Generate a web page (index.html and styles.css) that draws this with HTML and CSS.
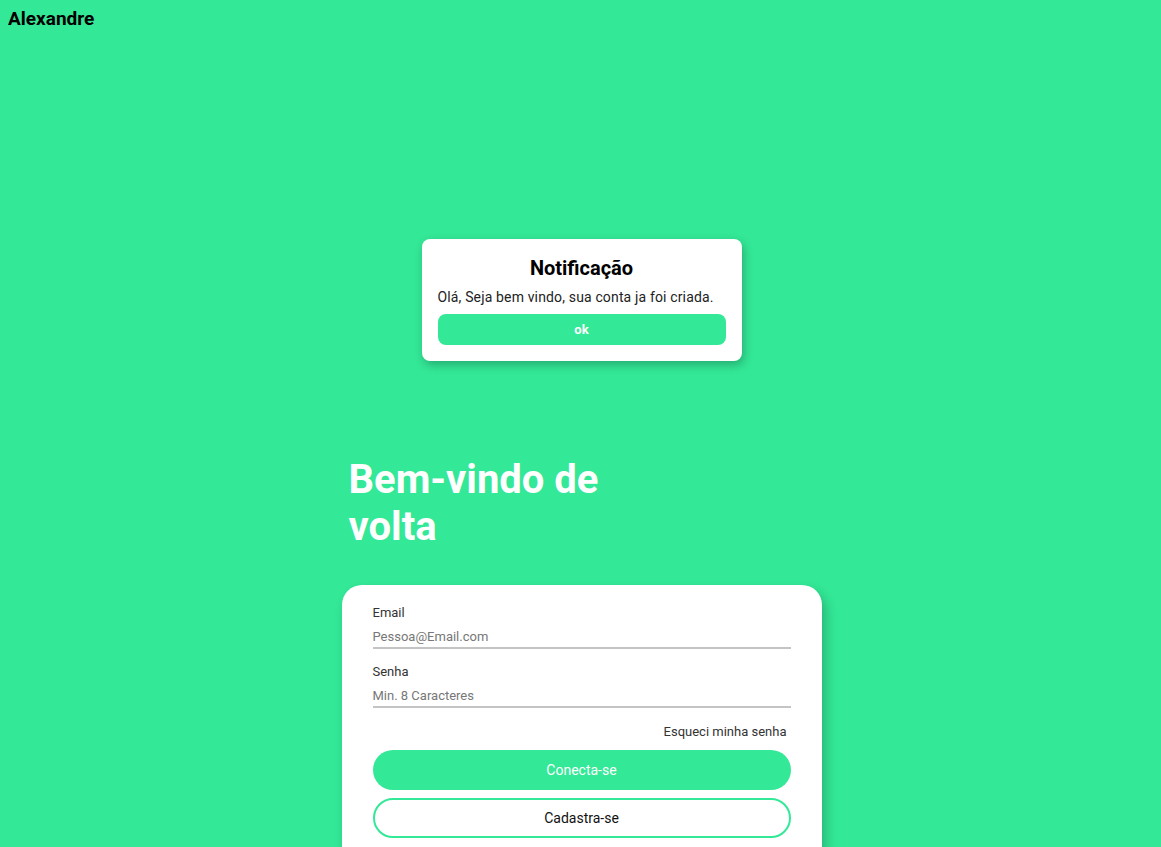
FILE: index.html
```html
<!DOCTYPE html>
<html lang="pt">
<head>
<meta charset="utf-8">
<title>Login</title>
<link rel="stylesheet" href="styles.css">
</head>
<body>
<header class="topbar">
  <h1 class="brand">Alexandre</h1>
</header>
<main class="page">
  <section class="notice">
    <h2 class="notice-title">Notificação</h2>
    <p class="notice-text">Olá, Seja bem vindo, sua conta ja foi criada.</p>
    <button class="notice-btn" type="button">ok</button>
  </section>
  <div class="login">
    <h2 class="welcome">Bem-vindo de volta</h2>
    <form class="card">
      <label class="field">
        <span class="field-label">Email</span>
        <input class="field-input" type="email" placeholder="Pessoa@Email.com">
      </label>
      <label class="field">
        <span class="field-label">Senha</span>
        <input class="field-input" type="password" placeholder="Min. 8 Caracteres">
      </label>
      <a class="forgot" href="#">Esqueci minha senha</a>
      <button class="btn btn-primary" type="button">Conecta-se</button>
      <button class="btn btn-outline" type="button">Cadastra-se</button>
    </form>
  </div>
</main>
</body>
</html>
```
FILE: styles.css
```css
html, body {
  height: 100%;
}
body {
  margin: 8px;
  background: #33e897;
  font-family: Roboto, "Liberation Sans", Arial, sans-serif;
  overflow: hidden;
}
.topbar {
  display: flex;
}
.brand {
  margin: 0;
  font-size: 19px;
  font-weight: 700;
  color: #000;
  line-height: 21px;
}
.page {
  display: flex;
  flex-direction: column;
  align-items: center;
}
.notice {
  margin-top: 210px;
  margin-left: 2px;
  width: 320px;
  box-sizing: border-box;
  padding: 17px 16px 16px;
  background: #fff;
  border-radius: 8px;
  box-shadow: 2px 4px 10px rgba(0, 0, 0, 0.25);
  display: flex;
  flex-direction: column;
}
.notice-title {
  margin: 0;
  text-align: center;
  font-size: 20px;
  font-weight: 700;
  color: #000;
  line-height: normal;
}
.notice-text {
  margin: 9px 0 0;
  font-size: 14px;
  letter-spacing: 0.15px;
  color: #222;
  line-height: normal;
}
.notice-btn {
  margin-top: 9px;
  height: 31px;
  border: none;
  border-radius: 8px;
  background: #33e897;
  color: #fff;
  font-family: inherit;
  font-size: 13px;
  font-weight: 700;
}
.login {
  margin-top: 95px;
  margin-left: 2px;
  width: 480px;
  display: flex;
  flex-direction: column;
}
.welcome {
  margin: 0 0 35px 7px;
  width: 300px;
  font-size: 40px;
  font-weight: 700;
  color: #fff;
  line-height: normal;
}
.card {
  background: #fff;
  border-radius: 20px;
  padding: 20px 31px 40px;
  box-shadow: 4px 6px 12px rgba(0, 0, 0, 0.22);
  display: flex;
  flex-direction: column;
}
.field {
  display: flex;
  flex-direction: column;
  margin-bottom: 15px;
}
.field-label {
  font-size: 13px;
  color: #333;
  line-height: normal;
}
.field-input {
  margin-top: 9px;
  border: none;
  border-bottom: 2px solid #c4c4c4;
  padding: 0 0 3px;
  font-family: inherit;
  font-size: 13px;
  color: #333;
  background: transparent;
  outline: none;
}
.field-input::placeholder {
  color: #777;
}
.forgot {
  align-self: flex-end;
  margin: 1px 4px 0 0;
  font-size: 13px;
  color: #333;
  text-decoration: none;
}
.btn {
  height: 40px;
  border-radius: 20px;
  font-family: inherit;
  font-size: 14px;
  box-sizing: border-box;
}
.btn-primary {
  margin-top: 11px;
  border: none;
  background: #33e897;
  color: #fff;
}
.btn-outline {
  margin-top: 8px;
  border: 2px solid #33e897;
  background: #fff;
  color: #111;
}
```
